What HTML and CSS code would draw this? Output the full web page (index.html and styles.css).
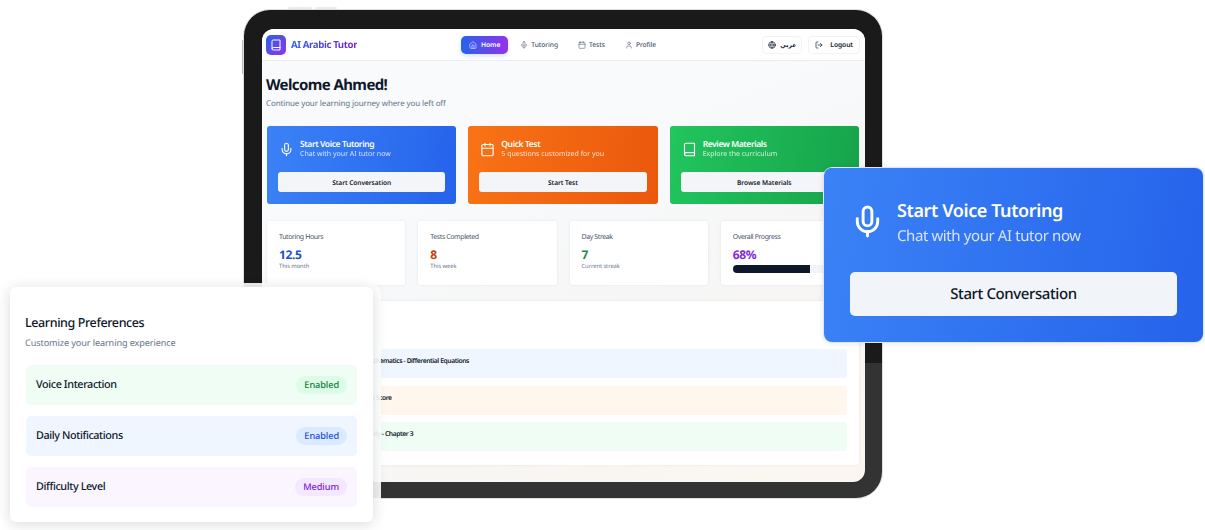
FILE: index.html
```html
<!DOCTYPE html>
<html>
<head>
<meta charset="utf-8">
<title>AI Arabic Tutor</title>
<link rel="stylesheet" href="styles.css">
</head>
<body>
<svg class="sprite" width="0" height="0">
  <symbol id="i-book" viewBox="0 0 24 24"><path d="M4 19.5v-15A2.5 2.5 0 0 1 6.5 2H20v20H6.5a2.5 2.5 0 0 1 0-5H20"/></symbol>
  <symbol id="i-home" viewBox="0 0 24 24"><path d="m3 9 9-7 9 7v11a2 2 0 0 1-2 2H5a2 2 0 0 1-2-2z"/><path d="M9 22V12h6v10"/></symbol>
  <symbol id="i-mic" viewBox="0 0 24 24"><path d="M12 2a3 3 0 0 0-3 3v7a3 3 0 0 0 6 0V5a3 3 0 0 0-3-3Z"/><path d="M19 10v2a7 7 0 0 1-14 0v-2"/><path d="M12 19v3"/></symbol>
  <symbol id="i-cal" viewBox="0 0 24 24"><path d="M8 2v4M16 2v4"/><rect x="3" y="4" width="18" height="18" rx="2"/><path d="M3 10h18"/></symbol>
  <symbol id="i-user" viewBox="0 0 24 24"><path d="M19 21v-2a4 4 0 0 0-4-4H9a4 4 0 0 0-4 4v2"/><circle cx="12" cy="7" r="4"/></symbol>
  <symbol id="i-globe" viewBox="0 0 24 24"><circle cx="12" cy="12" r="10"/><path d="M2 12h20"/><path d="M12 2a15 15 0 0 1 4 10 15 15 0 0 1-4 10 15 15 0 0 1-4-10 15 15 0 0 1 4-10z"/></symbol>
  <symbol id="i-logout" viewBox="0 0 24 24"><path d="M9 21H5a2 2 0 0 1-2-2V5a2 2 0 0 1 2-2h4"/><path d="m16 17 5-5-5-5"/><path d="M21 12H9"/></symbol>
</svg>

<div class="tablet">
  <span class="hw-btn hw-top1"></span>
  <span class="hw-btn hw-top2"></span>
  <span class="hw-btn hw-side"></span>
  <div class="screen">
    <header class="topbar">
      <div class="brand">
        <span class="logo"><svg class="ico"><use href="#i-book"/></svg></span>
        <span class="brand-name">AI Arabic Tutor</span>
      </div>
      <nav class="nav">
        <a class="nav-item active"><svg class="ico"><use href="#i-home"/></svg>Home</a>
        <a class="nav-item"><svg class="ico"><use href="#i-mic"/></svg>Tutoring</a>
        <a class="nav-item"><svg class="ico"><use href="#i-cal"/></svg>Tests</a>
        <a class="nav-item"><svg class="ico"><use href="#i-user"/></svg>Profile</a>
      </nav>
      <div class="top-actions">
        <button class="ghost lang"><svg class="ico"><use href="#i-globe"/></svg>عربي</button>
        <button class="ghost logout"><svg class="ico"><use href="#i-logout"/></svg>Logout</button>
      </div>
    </header>

    <main class="main">
      <h1>Welcome Ahmed!</h1>
      <p class="lead">Continue your learning journey where you left off</p>

      <section class="quick">
        <div class="qcard blue">
          <div class="qhead">
            <svg class="ico"><use href="#i-mic"/></svg>
            <div><h3>Start Voice Tutoring</h3><p>Chat with your AI tutor now</p></div>
          </div>
          <button class="qbtn">Start Conversation</button>
        </div>
        <div class="qcard orange">
          <div class="qhead">
            <svg class="ico"><use href="#i-cal"/></svg>
            <div><h3>Quick Test</h3><p>5 questions customized for you</p></div>
          </div>
          <button class="qbtn">Start Test</button>
        </div>
        <div class="qcard green">
          <div class="qhead">
            <svg class="ico"><use href="#i-book"/></svg>
            <div><h3>Review Materials</h3><p>Explore the curriculum</p></div>
          </div>
          <button class="qbtn">Browse Materials</button>
        </div>
      </section>

      <section class="stats">
        <div class="stat">
          <div class="stat-label">Tutoring Hours</div>
          <div class="stat-value c-blue">12.5</div>
          <div class="stat-note">This month</div>
        </div>
        <div class="stat">
          <div class="stat-label">Tests Completed</div>
          <div class="stat-value c-orange">8</div>
          <div class="stat-note">This week</div>
        </div>
        <div class="stat">
          <div class="stat-label">Day Streak</div>
          <div class="stat-value c-green">7</div>
          <div class="stat-note">Current streak</div>
        </div>
        <div class="stat">
          <div class="stat-label">Overall Progress</div>
          <div class="stat-value c-purple">68%</div>
          <div class="track"><div class="bar" style="width: 68%"></div></div>
        </div>
      </section>

      <section class="recent">
        <h2>Recent Activity</h2>
        <div class="activity a-blue">Mathematics - Differential Equations</div>
        <div class="activity a-orange">Top Score</div>
        <div class="activity a-green">Study - Chapter 3</div>
      </section>
    </main>
  </div>
</div>

<aside class="float-voice">
  <div class="fv-head">
    <svg class="ico"><use href="#i-mic"/></svg>
    <div><h3>Start Voice Tutoring</h3><p>Chat with your AI tutor now</p></div>
  </div>
  <button class="fv-btn">Start Conversation</button>
</aside>

<aside class="float-prefs">
  <div class="prefs">
    <h3>Learning Preferences</h3>
    <p>Customize your learning experience</p>
    <div class="pref p-green"><span>Voice Interaction</span><b>Enabled</b></div>
    <div class="pref p-blue"><span>Daily Notifications</span><b>Enabled</b></div>
    <div class="pref p-purple"><span>Difficulty Level</span><b>Medium</b></div>
  </div>
</aside>
</body>
</html>
```

FILE: styles.css
```css
html, body {margin: 0; padding: 0; height: 100%;}
body {background: #fff; font-family: "Noto Sans", "DejaVu Sans", sans-serif; letter-spacing: -.025em; text-rendering: geometricPrecision; color: #0f172a; overflow: hidden; position: relative;}
h1, h2, h3, p {margin: 0;}
button {font-family: inherit; letter-spacing: inherit; text-rendering: inherit; border: 0; padding: 0; color: #0f172a;}
.sprite {position: absolute;}
.ico {fill: none; stroke: currentColor; stroke-width: 2; stroke-linecap: round; stroke-linejoin: round; flex: none;}

/* tablet frame */
.tablet {position: absolute; left: 244px; top: 10px; width: 638px; height: 488px; box-sizing: border-box; padding: 19px 17px 16px 18px; border-radius: 26px; background: linear-gradient(#1a1a1a 72.4%, #333 72.4%); box-shadow: 0 0 0 1px #ddd;}
.hw-btn {position: absolute; background: #ececec; border-radius: 2px;}
.hw-top1 {left: 44px; top: -3px; width: 24px; height: 2px;}
.hw-top2 {left: 71px; top: -3px; width: 22px; height: 2px;}
.hw-side {left: -2px; top: 30px; width: 1px; height: 34px; background: #bbb;}
.screen {height: 100%; border-radius: 12px; overflow: hidden; display: flex; flex-direction: column; background: linear-gradient(160deg, #f8fafc 30%, #f6f6f6 60%, #fbf6ef 100%);}

/* top bar */
.topbar {height: 32px; flex: none; box-sizing: border-box; padding: 0 5px 0 4px; display: flex; align-items: center; justify-content: space-between; background: #fff; border-bottom: 1px solid #eceef1;}
.brand {display: flex; align-items: center; gap: 5px; width: 97px;}
.logo {flex: none; width: 20px; height: 20px; border-radius: 5px; background: linear-gradient(135deg, #2563eb, #9333ea); color: #fff; display: flex; align-items: center; justify-content: center;}
.logo .ico {width: 12px; height: 12px;}
.brand-name {font-size: 9.7px; font-weight: 700; white-space: nowrap; background: linear-gradient(90deg, #2563eb, #7e22ce); -webkit-background-clip: text; background-clip: text; color: transparent;}
.nav {display: flex; align-items: center; gap: 4px;}
.nav-item {display: flex; align-items: center; gap: 3px; height: 18px; padding: 0 8px; font-size: 6.7px; letter-spacing: -.01em; font-weight: 500; color: #475569; border-radius: 5px;}
.nav-item .ico {width: 8px; height: 8px; stroke-width: 1.6;}
.nav-item.active {gap: 4px; color: #fff; font-weight: 600; background: linear-gradient(90deg, #2563eb, #9333ea); box-shadow: 0 2px 4px rgba(37, 99, 235, .2);}
.top-actions {display: flex; gap: 6px;}
.ghost {height: 18px; padding: 0 5px; display: flex; align-items: center; gap: 4px; background: #fff; border: 1px solid #f1f2f4; border-radius: 4px; font-size: 6.7px; letter-spacing: -.01em; font-weight: 600;}
.ghost .ico {width: 8px; height: 8px;}
.lang {font-size: 6px;}
.logout {gap: 7px; padding: 0 6px;}

/* main */
.main {flex: 1; padding: 14px 6px 0 5px;}
h1 {font-size: 15px; font-weight: 700; line-height: 20px; letter-spacing: -.04em; margin-left: -1px; color: #0f172a;}
.lead {font-size: 8px; letter-spacing: -.015em; line-height: 12px; color: #64748b; margin: 3px 0 0 -1px;}

.quick {display: grid; grid-template-columns: repeat(3, 1fr); gap: 12px; margin-top: 16px;}
.qcard {height: 78px; box-sizing: border-box; padding: 12px 11px; border-radius: 3px; color: #fff;}
.blue {background: linear-gradient(100deg, #3b82f6, #2563eb);}
.orange {background: linear-gradient(100deg, #f97316, #ea580c);}
.green {background: linear-gradient(100deg, #22c55e, #16a34a);}
.qhead {display: flex; align-items: center; gap: 6px; height: 22px; padding-left: 1px;}
.qhead .ico {width: 15px; height: 15px; stroke-width: 1.8;}
.qhead h3 {font-size: 8.5px; font-weight: 600; line-height: 11px;}
.qhead p {font-size: 7px; letter-spacing: 0; line-height: 10px; opacity: .8;}
.qbtn {display: block; width: 100%; height: 20px; margin-top: 12px; background: #f3f5f9; border-radius: 3px; font-size: 6.6px; letter-spacing: -.01em; font-weight: 600;}

.stats {display: grid; grid-template-columns: repeat(4, 1fr); gap: 13px; margin-top: 17px;}
.stat {height: 64px; box-sizing: border-box; padding: 12px 12px; background: #fff; border-radius: 3px; box-shadow: 0 0 3px rgba(15, 23, 42, .08);}
.stat-label {font-size: 7px; line-height: 9px; color: #475569;}
.stat-value {font-size: 12px; font-weight: 700; line-height: 16px; margin-top: 5px;}
.stat-note {font-size: 5.8px; letter-spacing: -.01em; line-height: 8px; margin-top: -1px; color: #64748b;}
.c-blue {color: #1d4ed8;}
.c-orange {color: #c2410c;}
.c-green {color: #15903f;}
.c-purple {color: #8427dc;}
.track {height: 8px; margin-top: 2px; background: #f1f5f9; border-radius: 4px; overflow: hidden;}
.bar {height: 100%; background: #0f172a;}

.recent {height: 164px; box-sizing: border-box; margin-top: 16px; padding: 14px 12px 0; background: #fff; border-radius: 3px; box-shadow: 0 0 3px rgba(15, 23, 42, .08);}
.recent h2 {font-size: 10px; font-weight: 600; line-height: 20px; margin-bottom: 14px;}
.activity {height: 29px; box-sizing: border-box; margin-bottom: 7.5px; padding: 7px 0 0 85px; border-radius: 3px; font-size: 6.7px; font-weight: 600; line-height: 9px;}
.a-blue {background: #eff6ff;}
.a-orange {background: #fff7ed;}
.a-green {background: #f0fdf4;}

/* floating voice card */
.float-voice {position: absolute; left: 824px; top: 168px; width: 379px; height: 174px; box-sizing: border-box; padding: 32px 26px 0; border-radius: 8px; color: #fff; background: linear-gradient(100deg, #3b82f6, #2563eb); box-shadow: 0 0 0 1px #dbe7fb, 0 1px 6px rgba(15, 23, 42, .12);}
.fv-head {display: flex; align-items: center; gap: 12px; height: 46px;}
.fv-head .ico {width: 35px; height: 35px; margin-bottom: 4px;}
.fv-head h3 {font-size: 18px; font-weight: 600; line-height: 26px;}
.fv-head p {font-size: 15px; line-height: 24px; opacity: .8;}
.fv-btn {display: block; width: 100%; height: 44px; margin-top: 26px; background: #f1f4f9; border-radius: 5px; font-size: 15px; font-weight: 500;}

/* floating preferences card */
.float-prefs {position: absolute; left: 2px; top: 283px; width: 379px; height: 247px; box-sizing: border-box; padding: 4px 8px 8px; background: rgba(255, 255, 255, .92); border-radius: 12px;}
.prefs {height: 235px; box-sizing: border-box; padding: 26px 16px 0; background: #fff; border-radius: 6px; box-shadow: 0 2px 14px rgba(15, 23, 42, .16);}
.prefs h3 {font-size: 12.5px; font-weight: 500; line-height: 20px; margin-left: -1px;}
.prefs p {font-size: 9.1px; letter-spacing: -.01em; line-height: 14px; color: #64748b; margin: 3px 0 0 -1px;}
.pref {height: 40px; box-sizing: border-box; padding: 0 10px; margin-top: 11px; display: flex; align-items: center; justify-content: space-between; border-radius: 5px; font-size: 10.8px; font-weight: 500;}
.pref span {margin-bottom: 2px;}
.prefs p + .pref {margin-top: 15px;}
.pref b {font-size: 9.2px; letter-spacing: -.01em; font-weight: 500; height: 18px; line-height: 18px; padding: 0 8px; border-radius: 9px;}
.p-green {background: #f0fdf4;}
.p-green b {background: #dcfce7; color: #15803d;}
.p-blue {background: #eff6ff;}
.p-blue b {background: #dbeafe; color: #1d4ed8;}
.p-purple {background: #faf5ff;}
.p-purple b {background: #f3e8ff; color: #7e22ce;}
```
